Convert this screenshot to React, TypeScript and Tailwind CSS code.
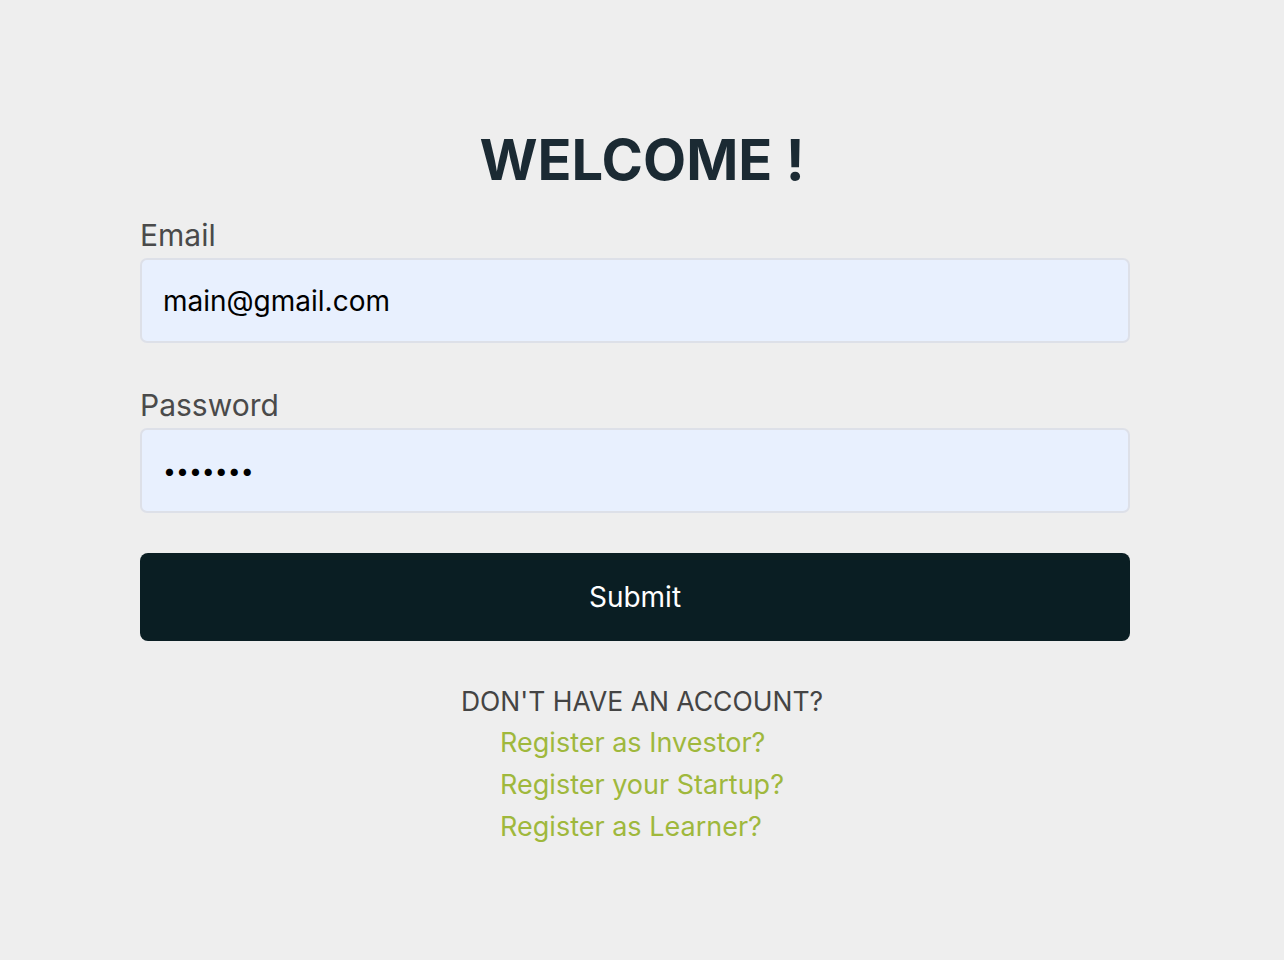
const font = { fontFamily: 'Inter, "Noto Sans", sans-serif' };

const Field = ({ label, type, value, size }: { label: string; type: string; value: string; size: string }) => (
    <div className="flex flex-col">
        <label className="text-[30px] leading-[36px] text-[#4a4a4a] mb-[5px]">{label}</label>
        <input
            type={type}
            defaultValue={value}
            readOnly
            className={`h-[85px] w-full rounded-[7px] border-2 border-[#dde0e8] bg-[#e8f0fe] px-[21px] text-black outline-none ${size}`}
        />
    </div>
);

const App = () => {
    return (
        <div className="min-h-[960px] w-full bg-[#eeeeee] pt-[122px]" style={font}>
            <h1 className="text-center text-[56px] font-bold leading-[76px] text-[#1b2a33]">WELCOME !</h1>
            <form className="ml-[140px] w-[990px] mt-[19px] flex flex-col">
                <Field label="Email" type="email" value="main@gmail.com" size="text-[28px]" />
                <div className="h-[44px]" />
                <Field label="Password" type="password" value="1234567" size="text-[23px]" />
                <button
                    type="button"
                    className="mt-[40px] h-[88px] w-full rounded-[8px] bg-[#0a1e23] text-[28px] text-white"
                >
                    Submit
                </button>
            </form>
            <div className="mt-[42px] flex flex-col items-center">
                <p className="text-[26.5px] leading-[36px] text-[#444444]">DON'T HAVE AN ACCOUNT?</p>
                <div className="mt-[3px] flex flex-col items-start text-[27px] leading-[42px] text-[#9fb83c]">
                    <a href="#">Register as Investor?</a>
                    <a href="#">Register your Startup?</a>
                    <a href="#">Register as Learner?</a>
                </div>
            </div>
        </div>
    );
};

export default App;
